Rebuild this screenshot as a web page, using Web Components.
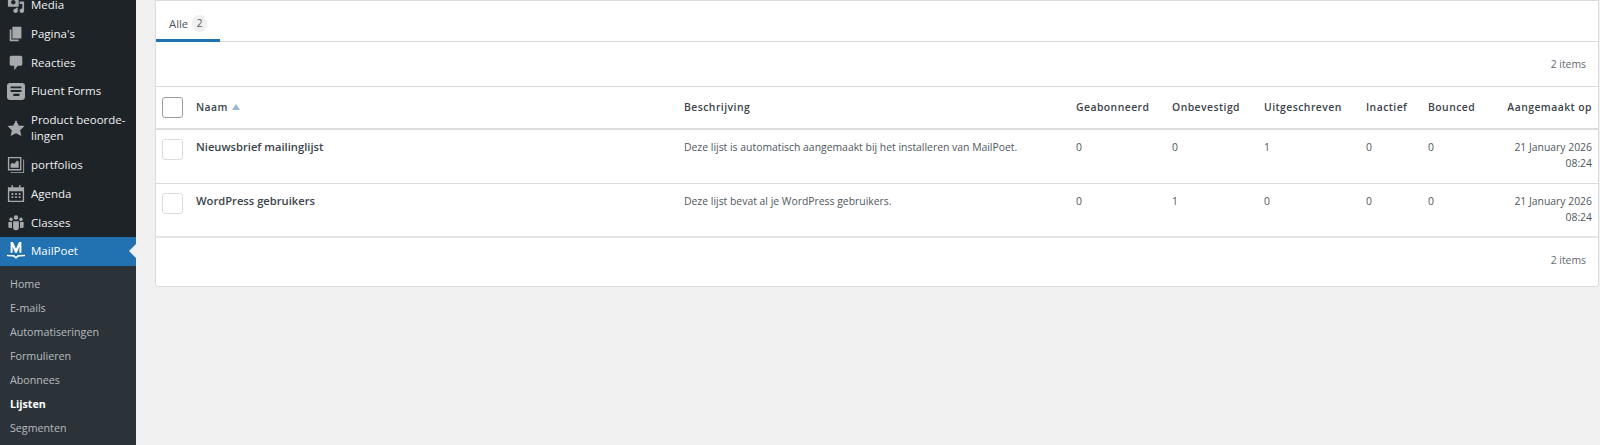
<!doctype html>
<html><head><meta charset="utf-8">
<style>
html,body{margin:0;height:445px;overflow:hidden;background:#f0f0f1}
body{font-family:"Open Sans","Noto Sans",sans-serif;display:flex}
</style></head><body>
<wp-sidebar>
 <wp-menu-item label="Media" icon="media"></wp-menu-item>
 <wp-menu-item label="Pagina's" icon="page"></wp-menu-item>
 <wp-menu-item label="Reacties" icon="comments"></wp-menu-item>
 <wp-menu-item label="Fluent Forms" icon="fluent"></wp-menu-item>
 <wp-menu-item label="Product beoorde-&#10;lingen" icon="star"></wp-menu-item>
 <wp-menu-item label="portfolios" icon="portfolio"></wp-menu-item>
 <wp-menu-item label="Agenda" icon="calendar"></wp-menu-item>
 <wp-menu-item label="Classes" icon="groups"></wp-menu-item>
 <wp-menu-item label="MailPoet" icon="mailpoet" active></wp-menu-item>
 <wp-submenu>
  <wp-sub-item>Home</wp-sub-item>
  <wp-sub-item>E-mails</wp-sub-item>
  <wp-sub-item>Automatiseringen</wp-sub-item>
  <wp-sub-item>Formulieren</wp-sub-item>
  <wp-sub-item>Abonnees</wp-sub-item>
  <wp-sub-item current>Lijsten</wp-sub-item>
  <wp-sub-item>Segmenten</wp-sub-item>
 </wp-submenu>
</wp-sidebar>
<list-card>
 <list-tabs label="Alle" count="2"></list-tabs>
 <list-count kind="top">2 items</list-count>
 <list-row head>
  <list-check slot="check" big></list-check>
  <list-name head>Naam<list-sort></list-sort></list-name>
  <span>Beschrijving</span><span>Geabonneerd</span><span>Onbevestigd</span><span>Uitgeschreven</span><span>Inactief</span><span>Bounced</span><span class="r">Aangemaakt op</span>
 </list-row>
 <list-row>
  <list-check slot="check"></list-check>
  <list-name>Nieuwsbrief mailinglijst</list-name>
  <span>Deze lijst is automatisch aangemaakt bij het installeren van MailPoet.</span><span>0</span><span>0</span><span>1</span><span>0</span><span>0</span><span class="r">21 January 2026<br>08:24</span>
 </list-row>
 <list-row last>
  <list-check slot="check"></list-check>
  <list-name>WordPress gebruikers</list-name>
  <span>Deze lijst bevat al je WordPress gebruikers.</span><span>0</span><span>1</span><span>0</span><span>0</span><span>0</span><span class="r">21 January 2026<br>08:24</span>
 </list-row>
 <list-count kind="bottom">2 items</list-count>
</list-card>
<script>
const ICONS={
media:'<path d="M13 11V4c0-.55-.45-1-1-1h-1.67L9 1H5L3.67 3H2c-.55 0-1 .45-1 1v7c0 .55.45 1 1 1h10c.55 0 1-.45 1-1zM7 4.500c1.380 0 2.500 1.120 2.500 2.500S8.380 9.500 7 9.500 4.500 8.380 4.500 7 5.620 4.500 7 4.500zM14 6h5v10.500c0 1.380-1.120 2.500-2.500 2.500S14 17.880 14 16.500s1.120-2.500 2.500-2.500c.17 0 .34.02.5.05V9h-3V6zm-4 8.050V13h2v3.500c0 1.380-1.120 2.500-2.500 2.500S7 17.880 7 16.500 8.120 14 9.500 14c.17 0 .34.02.5.05z"/>',
page:'<path d="M6 15V2h10v13H6zm-1 1h8v2H3V5h2v11z"/>',
comments:'<path d="M5 2h10c1.100 0 2 .9 2 2v7c0 1.100-.9 2-2 2h-3l-4 5v-5H5c-1.100 0-2-.9-2-2V4c0-1.100.9-2 2-2z"/>',
fluent:'<rect x="0" y="1" width="20" height="19" rx="3.500"/><path fill="#1d2327" d="M4 5h12v2H4zM4 9h12v2H4zM7 13h7v1.600l-1.400 1H7z"/>',
star:'<path d="M10 1l2.900 6.100 6.600.8-4.900 4.500 1.300 6.600L10 15.700 4.100 19l1.300-6.600L.5 7.900l6.600-.8z"/>',
portfolio:'<path fill-rule="evenodd" d="M1 1h15v15H1zM2.500 2.500v12h12v-12zM18 4h1v15H4v-1h14z"/><path d="M4 13V9l2.500-1.500L8 9l3-4 2 1.500V13z"/>',
calendar:'<path fill-rule="evenodd" d="M5 0h1.500v2.500h7V0H15v2.500h4V19H1V2.500h4zM2.500 7v10.500h15V7z"/><path d="M5 9h2v2H5zM9 9h2v2H9zM13 9h2v2h-2zM5 12.500h2v2H5zM9 12.500h2v2H9zM13 12.500h2v2h-2z"/>',
groups:'<circle cx="10" cy="4" r="2.500"/><circle cx="4.500" cy="6" r="2"/><circle cx="15.500" cy="6" r="2"/><path d="M6.800 8h6.400v7.500c0 1.600-1.300 2.500-3.200 2.500s-3.200-.9-3.200-2.500zM1.500 9h4v6.500H3c-1 0-1.500-.7-1.500-1.500zM14.500 9h4v5c0 .8-.5 1.500-1.500 1.500h-2.500z"/>',
mailpoet:'<path fill="#fff" d="M4 0h2.600l3.400 7.500L13.400 0H16v12h-2.200V5L11 12H9L6.200 5v7H4z"/><path fill="none" stroke="#fff" stroke-width="1.800" d="M0 15c3 0 5.500.3 7.500.4L10 17.500l2.500-2.100c2-.1 4.500-.4 7.500-.4"/>'
};
function def(name,css,html){
 customElements.define(name,class extends HTMLElement{
  connectedCallback(){
   if(this.shadowRoot)return;
   const r=this.attachShadow({mode:'open'});
   r.innerHTML='<style>'+css+'</style>'+(typeof html==='function'?html(this):html);
  }
 });
}
def('wp-sidebar',':host{display:block;flex:0 0 136px;width:136px;height:445px;overflow:hidden;background:#1d2327}.s{margin-top:-9.400px}','<div class="s"><slot></slot></div>');
def('wp-menu-item',`:host{display:flex;align-items:center;min-height:28.800px;color:#f0f0f1;font-size:11.500px;line-height:16px;position:relative}
:host([active]){background:#2271b1;color:#fff}
svg{flex:0 0 18px;width:18px;height:18px;margin:0 6.500px;fill:#a7aaad}
:host([active]) svg{fill:#fff}
.t{white-space:pre-line;padding:6.400px 0}
.a{display:none;position:absolute;right:0;top:50%;margin-top:-7px;border:7px solid transparent;border-right-color:#f0f0f1;border-left:0}
:host([active]) .a{display:block}`,
 h=>`<svg viewBox="0 0 20 20">${ICONS[h.getAttribute('icon')]}</svg><span class="t">${h.getAttribute('label')}</span><i class="a"></i>`);
def('wp-submenu',':host{display:block;background:#2c3338;padding:6px 0 9px}','<slot></slot>');
def('wp-sub-item',`:host{display:block;height:24.100px;line-height:24.100px;padding-left:10px;font-size:10.700px;color:rgba(240,246,252,.7)}
:host([current]){color:#fff;font-weight:700}`,'<slot></slot>');
def('list-card',`:host{display:block;box-sizing:border-box;flex:0 0 auto;width:1444px;height:287px;margin-left:19px;background:#fff;border:1px solid #dcdcde;border-radius:0 0 3px 3px;color:#3c434a;font-size:11.700px}`,'<slot></slot>');
def('list-tabs',`:host{display:block;height:40px;border-bottom:1px solid #dcdcde}
.t{display:inline-flex;align-items:center;box-sizing:border-box;width:64px;height:41px;padding:6px 0 0 13px;border-bottom:3px solid #2271b1;color:#50575e;font-size:11.300px;gap:4px}
.c{display:inline-block;width:15px;height:17px;line-height:17px;text-align:center;border-radius:8px;background:#f0f0f1;font-size:10px}`,
 h=>`<div class="t">${h.getAttribute('label')}<span class="c">${h.getAttribute('count')}</span></div>`);
def('list-count',`:host{display:flex;align-items:center;justify-content:flex-end;box-sizing:border-box;padding-right:12px;color:#646970;font-size:10.400px}
:host([kind=top]){height:45px;border-bottom:1px solid #dcdcde}
:host([kind=bottom]){height:44px}`,'<slot></slot>');
def('list-row',`:host{display:grid;box-sizing:border-box;height:54px;grid-template-columns:40px 488px 392px 96px 92px 102px 62px 60px 1fr;padding-top:9px;border-bottom:1px solid #dcdcde;font-size:10.400px;line-height:16.800px;color:#50575e}
:host([head]){height:42.500px;padding-top:0;align-items:center;border-bottom:2px solid #dcdcde;font-weight:600;letter-spacing:.45px;color:#3c434a}
:host([last]){border-bottom:2px solid #e6e6e6}
::slotted(.r){text-align:right;padding-right:6px;white-space:nowrap}
::slotted(span){display:block}`,'<div><slot name="check"></slot></div><slot></slot>');
def('list-check',`:host{display:block;box-sizing:border-box;width:21px;height:21px;margin-left:6px;margin-top:.5px;border:1px solid #dcdcde;border-radius:3px;background:#fff}
:host([big]){margin-top:0;border-color:#9a9da1}`,'');
def('list-name',`:host{display:block;font-size:11.200px;font-weight:600;color:#3c434a;line-height:16px}
:host([head]){font-size:10.400px}`,'<slot></slot>');
def('list-sort',`:host{display:inline-block;width:0;height:0;margin-left:4px;vertical-align:1px;border:4.500px solid transparent;border-top:0;border-bottom:6px solid #9db6d2}`,'');
</script>
</body></html>
